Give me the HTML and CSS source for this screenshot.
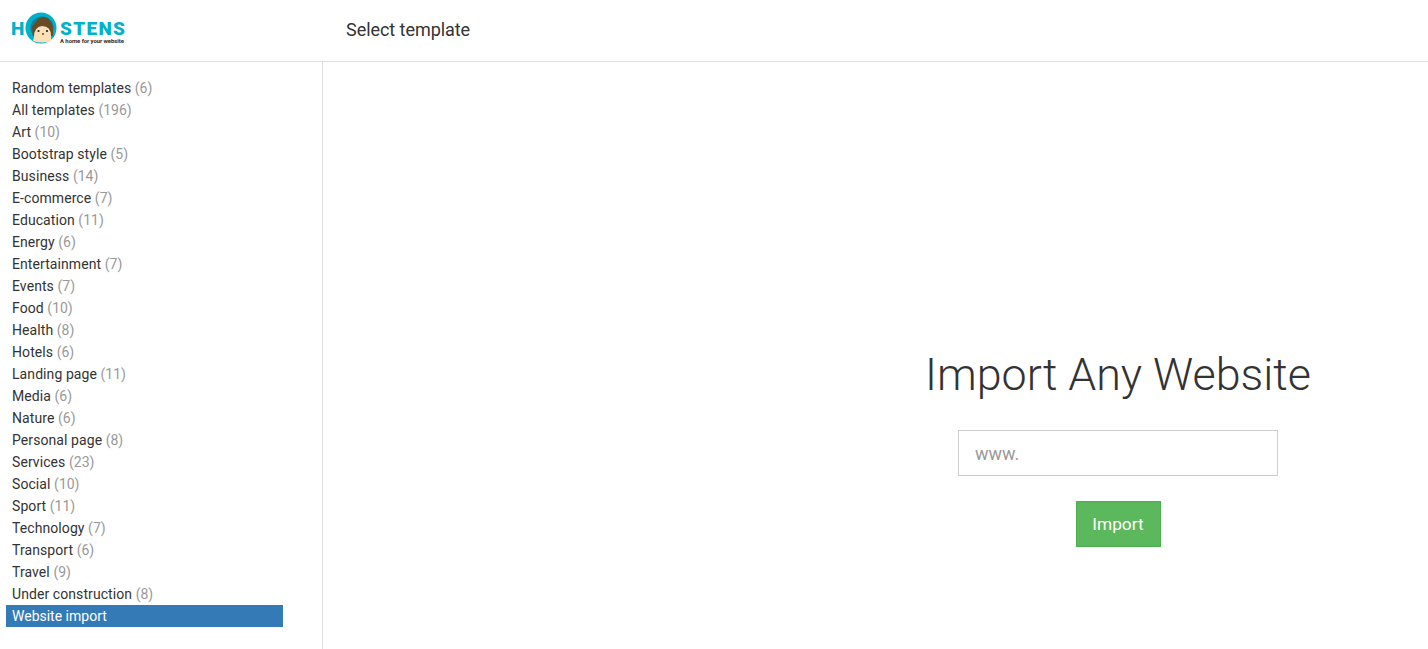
FILE: index.html
```html
<!DOCTYPE html>
<html lang="en">
<head>
    <meta charset="UTF-8">
    <title>Select template</title>
    <link rel="stylesheet" href="styles.css">
</head>
<body>
    <header class="topbar">
        <a class="logo" href="#">
            <svg width="116" height="36" viewBox="0 0 116 36">
                <text x="-1" y="23" class="logo-text">H</text>
                <circle cx="29" cy="16" r="15.5" fill="#00afc8"/>
                <circle cx="30" cy="16" r="11.5" fill="#0a8296"/>
                <path d="M21 24 L20 15 L23 11 L26 7 L31 5 L36 6 L39 10 L41 15 L41 24 Z" fill="#6b4a26"/>
                <path d="M21 29 L22 25 Q22 15 30 14 Q39 14 39 24 L39 29 Q30 32 21 29 Z" fill="#fbe0b8"/>
                <circle cx="26.5" cy="19" r="1.1" fill="#222"/>
                <circle cx="35" cy="19" r="1.1" fill="#222"/>
                <circle cx="31" cy="22" r="1" fill="#6b4a26"/>
                <text x="48" y="23" class="logo-text" textLength="65">STENS</text>
                <text x="48" y="31" class="logo-tag" textLength="64">A home for your website</text>
            </svg>
        </a>
        <div class="page-title">Select template</div>
    </header>
    <div class="layout">
        <aside class="sidebar">
            <ul class="categories">
                <li><a href="#">Random templates <span>(6)</span></a></li>
                <li><a href="#">All templates <span>(196)</span></a></li>
                <li><a href="#">Art <span>(10)</span></a></li>
                <li><a href="#">Bootstrap style <span>(5)</span></a></li>
                <li><a href="#">Business <span>(14)</span></a></li>
                <li><a href="#">E-commerce <span>(7)</span></a></li>
                <li><a href="#">Education <span>(11)</span></a></li>
                <li><a href="#">Energy <span>(6)</span></a></li>
                <li><a href="#">Entertainment <span>(7)</span></a></li>
                <li><a href="#">Events <span>(7)</span></a></li>
                <li><a href="#">Food <span>(10)</span></a></li>
                <li><a href="#">Health <span>(8)</span></a></li>
                <li><a href="#">Hotels <span>(6)</span></a></li>
                <li><a href="#">Landing page <span>(11)</span></a></li>
                <li><a href="#">Media <span>(6)</span></a></li>
                <li><a href="#">Nature <span>(6)</span></a></li>
                <li><a href="#">Personal page <span>(8)</span></a></li>
                <li><a href="#">Services <span>(23)</span></a></li>
                <li><a href="#">Social <span>(10)</span></a></li>
                <li><a href="#">Sport <span>(11)</span></a></li>
                <li><a href="#">Technology <span>(7)</span></a></li>
                <li><a href="#">Transport <span>(6)</span></a></li>
                <li><a href="#">Travel <span>(9)</span></a></li>
                <li><a href="#">Under construction <span>(8)</span></a></li>
                <li><a class="active" href="#">Website import</a></li>
            </ul>
        </aside>
        <main class="content">
            <div class="import-box">
                <h1>Import Any Website</h1>
                <input class="url-input" type="text" placeholder="www.">
                <button class="import-btn">Import</button>
            </div>
        </main>
    </div>
</body>
</html>
```

FILE: styles.css
```css
* {
    margin: 0;
    padding: 0;
    box-sizing: border-box;
}

html, body {
    height: 100%;
    overflow: hidden;
}

body {
    font-family: Roboto, sans-serif;
    font-size: 14px;
    color: #333;
    background: #fff;
}

.topbar {
    height: 62px;
    display: flex;
    align-items: center;
    border-bottom: 1px solid #e0e0e0;
}

.logo {
    display: block;
    width: 346px;
    padding-left: 12px;
    height: 36px;
    margin-top: -1px;
}

.logo-text {
    font-family: Roboto, sans-serif;
    font-weight: 900;
    font-size: 19px;
    fill: #00b2ca;
}

.logo-tag {
    font-family: Roboto, sans-serif;
    font-weight: 700;
    font-size: 6px;
    fill: #3a2a1a;
}

.page-title {
    font-size: 18px;
    letter-spacing: -0.05px;
    color: #333;
    margin-top: -2px;
}

.layout {
    display: flex;
    height: 587px;
}

.sidebar {
    width: 323px;
    border-right: 1px solid #e0e0e0;
    padding: 15px 39px 0 6px;
}

.categories {
    list-style: none;
}

.categories a {
    display: block;
    height: 22px;
    line-height: 22px;
    padding-left: 6px;
    color: #333;
    letter-spacing: 0.08px;
    text-decoration: none;
}

.categories span {
    color: #999;
    letter-spacing: 0;
}

.categories a.active {
    background: #337ab7;
    color: #fff;
    letter-spacing: 0;
}

.content {
    flex: 1;
    padding: 286px 0 0 485px;
}

.import-box {
    display: flex;
    flex-direction: column;
    align-items: center;
}

h1 {
    font-size: 44.8px;
    font-weight: 300;
    line-height: 54px;
    color: #333;
    margin-bottom: 28px;
}

.url-input {
    width: 320px;
    height: 46px;
    padding: 0 16px;
    border: 1px solid #ccc;
    font-family: Roboto, sans-serif;
    font-size: 18px;
    color: #333;
    outline: none;
    margin-bottom: 25px;
}

.url-input::placeholder {
    color: #999;
}

.import-btn {
    width: 85px;
    height: 46px;
    background: #5cb85c;
    border: 1px solid #4cae4c;
    color: #fff;
    font-family: Roboto, sans-serif;
    font-size: 17.3px;
    font-weight: 400;
    cursor: pointer;
}
```
